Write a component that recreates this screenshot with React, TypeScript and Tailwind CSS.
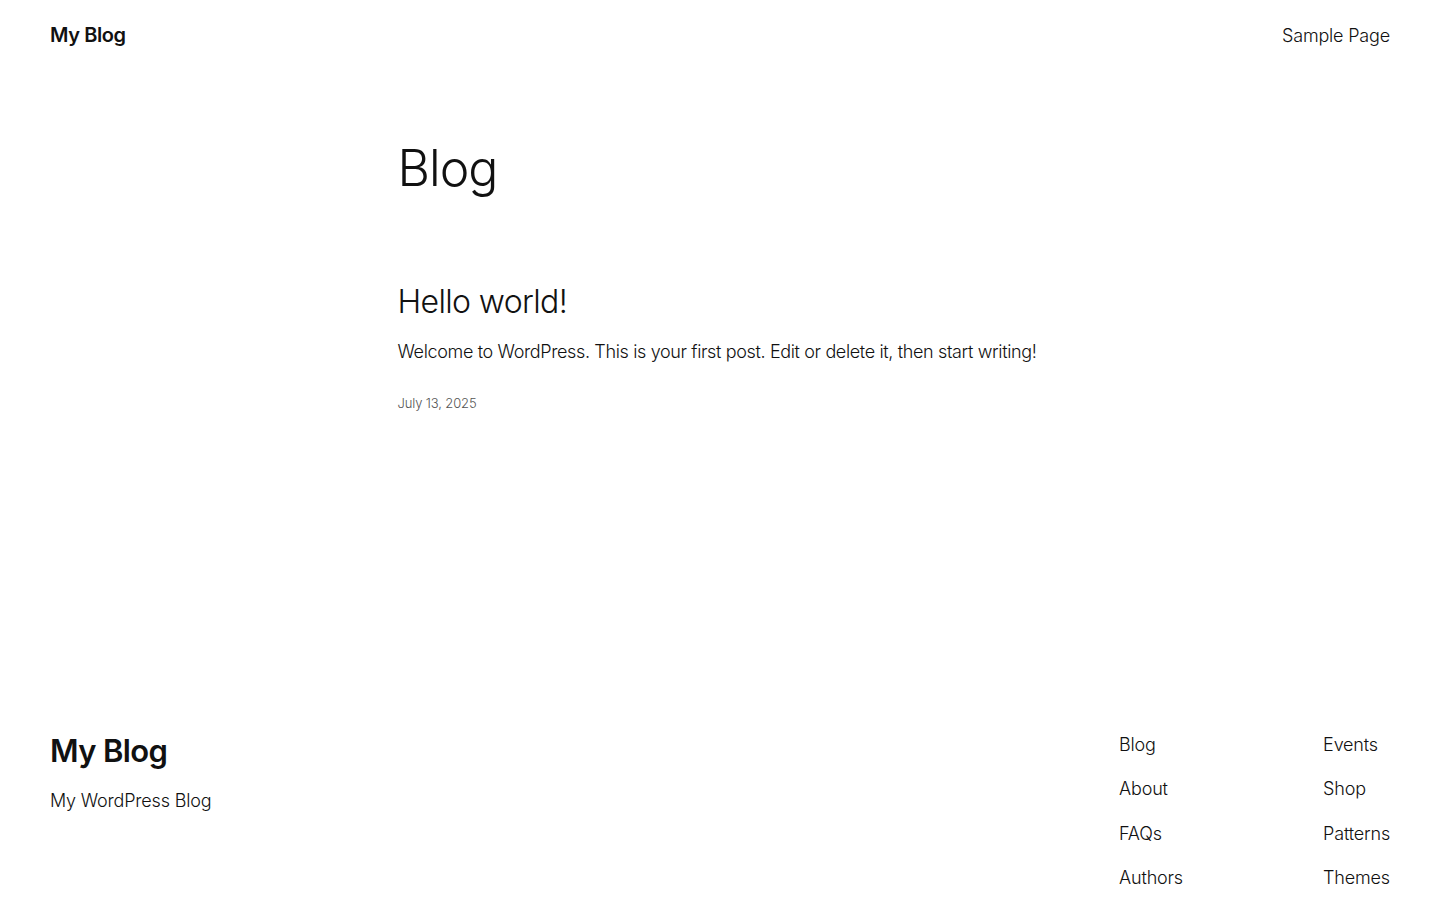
const font = { fontFamily: "Inter, 'Noto Sans', sans-serif" };

const navA = ["Blog", "About", "FAQs", "Authors"];
const navB = ["Events", "Shop", "Patterns", "Themes"];

export default function App() {
  return (
    <div className="min-h-screen bg-white text-[#111111]" style={font}>
      <header className="flex items-center justify-between px-[50px] h-[70px]">
        <a className="text-[20px] font-semibold tracking-[-0.02em]">My Blog</a>
        <nav>
          <a className="text-[18px] font-light tracking-[-0.01em]">Sample Page</a>
        </nav>
      </header>

      <main className="mx-auto w-[645px] pt-[68px]">
        <h1 className="text-[50px] font-light leading-[1.2] tracking-[-0.02em]">Blog</h1>

        <article className="mt-[85px]">
          <h2 className="text-[32px] font-light leading-[1.2] tracking-[-0.02em]">Hello world!</h2>
          <p className="mt-[18px] text-[18px] font-light leading-[1.4] tracking-[-0.02em]">
            Welcome to WordPress. This is your first post. Edit or delete it, then start writing!
          </p>
          <div className="mt-[29px] text-[13px] font-light text-[#555555] tracking-[-0.01em]">July 13, 2025</div>
        </article>
      </main>

      <footer className="mt-[319px] flex justify-between px-[50px] pb-[60px]">
        <div>
          <div className="text-[31px] font-semibold tracking-[-0.02em] leading-[1.2]">My Blog</div>
          <div className="mt-[18px] text-[18px] font-light tracking-[-0.01em]">My WordPress Blog</div>
        </div>
        <div className="flex gap-[140px]">
          <ul className="flex flex-col gap-[19.3px] w-[64px]">
            {navA.map((n) => (
              <li key={n} className="text-[18px] font-light leading-[25px] tracking-[-0.01em] whitespace-nowrap">{n}</li>
            ))}
          </ul>
          <ul className="flex flex-col gap-[19.3px]">
            {navB.map((n) => (
              <li key={n} className="text-[18px] font-light leading-[25px] tracking-[-0.01em] whitespace-nowrap">{n}</li>
            ))}
          </ul>
        </div>
      </footer>
    </div>
  );
}
